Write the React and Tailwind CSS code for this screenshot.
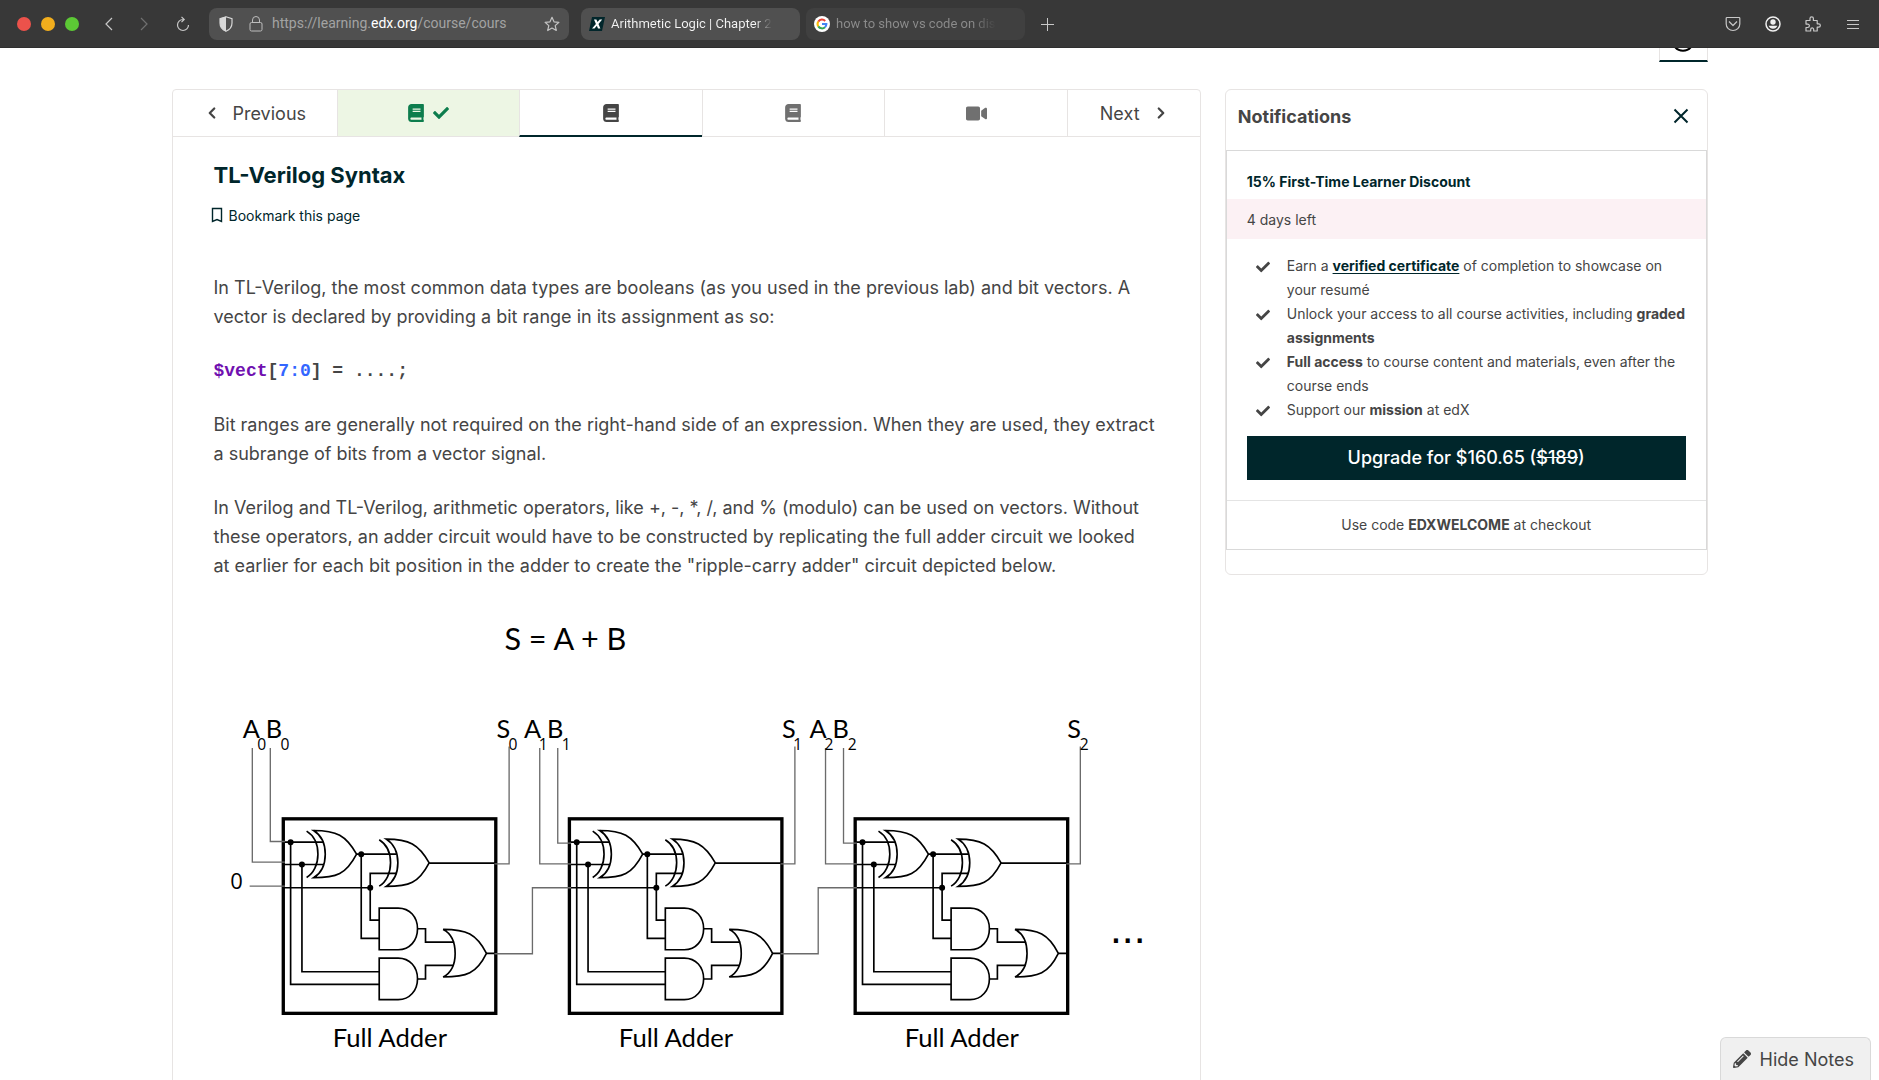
import { FaBook, FaCheck, FaVideo, FaPencilAlt } from "react-icons/fa";
import { ChevronLeft, ChevronRight } from "lucide-react";

const INK = "text-[#454545]";

function ShieldIcon() {
  return (
    <svg width="14" height="16" viewBox="0 0 14 16" className="shrink-0">
      <path d="M7 .8 13 2.6V7c0 3.8-2 6.6-6 8.3C3 13.600 1 10.800 1 7V2.600Z" fill="none" stroke="#d8d8d8" strokeWidth="1.200" />
      <path d="M7 .5v15C3 13.600 1 10.800 1 7V2.600Z" fill="#d8d8d8" />
    </svg>
  );
}

function LockIcon() {
  return (
    <svg width="14" height="16" viewBox="0 0 14 16" className="shrink-0" fill="none" stroke="#bdbdbd">
      <rect x="1" y="6.500" width="12" height="8.500" rx="1.500" />
      <path d="M3.500 6.500V4a3.500 3.500 0 0 1 7 0v2.500" />
    </svg>
  );
}

function StarIcon() {
  return (
    <svg width="16" height="16" viewBox="0 0 16 16" fill="none" stroke="#c4c4c4" strokeWidth="1.200" strokeLinejoin="round">
      <path d="m8 1.300 2 4.500 4.900.5-3.700 3.300 1.100 4.900L8 12l-4.300 2.500 1.100-4.900L1.100 6.300 6 5.800Z" />
    </svg>
  );
}

function EdxIcon() {
  return (
    <svg width="16" height="16" viewBox="0 0 16 16" className="shrink-0">
      <path d="M3 1h13l-3 14H0Z" fill="#02262b" />
      <path d="M5 3.500h2.400l1.100 2.600 2.200-2.600h2.500L9.500 7.900l1.900 4.600H9L7.900 9.700l-2.400 2.800H3L6.900 8Z" fill="#fff" />
    </svg>
  );
}

function GoogleIcon() {
  return (
    <svg width="16" height="16" viewBox="0 0 16 16" className="shrink-0" fill="none" strokeWidth="2">
      <circle cx="8" cy="8" r="8" fill="#fff" />
      <path d="M4.300 5.600A4.400 4.400 0 0 1 11.200 5" stroke="#ea4335" />
      <path d="M4.300 10.400a4.400 4.400 0 0 1 0-4.800" stroke="#fbbc05" />
      <path d="M11 11.200a4.400 4.400 0 0 1-6.700-.8" stroke="#34a853" />
      <path d="M8 8h4.400a4.400 4.400 0 0 1-1.400 3.200" stroke="#4285f4" />
    </svg>
  );
}

function BrowserBar() {
  return (
    <header className="flex h-12 shrink-0 items-center border-b border-[#2f2f2f] bg-[#383838] font-[Roboto,sans-serif]">
      <div className="flex w-[209px] shrink-0 items-center pl-[17px]">
        <div className="flex gap-[10px]">
          <button aria-label="Close window" className="size-[14px] rounded-full bg-[#ec524b]" />
          <button aria-label="Minimise window" className="size-[14px] rounded-full bg-[#f2ae1d]" />
          <button aria-label="Maximise window" className="size-[14px] rounded-full bg-[#5cc935]" />
        </div>
        <button aria-label="Back" className="ml-[22px]">
          <svg width="16" height="16" viewBox="0 0 16 16" fill="none" stroke="#c8c8c8" strokeWidth="1.200"><path d="M11 2 5 8l6 6" /></svg>
        </button>
        <button aria-label="Forward" className="ml-[19px]">
          <svg width="16" height="16" viewBox="0 0 16 16" fill="none" stroke="#707070" strokeWidth="1.200"><path d="m5 2 6 6-6 6" /></svg>
        </button>
        <button aria-label="Reload" className="ml-[23px]">
          <svg width="16" height="16" viewBox="0 0 16 16" fill="none" stroke="#c8c8c8" strokeWidth="1.200"><path d="M8.500 3.500H8A5.500 5.500 0 1 0 13.500 9M6.500 .8l2.700 2.700-2.700 2.700" /></svg>
        </button>
      </div>
      <div className="flex h-8 w-[360px] shrink-0 items-center rounded-lg bg-[#505050] pr-[9px] pl-[10px]">
        <ShieldIcon />
        <span className="ml-4"><LockIcon /></span>
        <span className="ml-[9px] flex-1 text-[14px] whitespace-nowrap text-[#a3a3a3]">
          https://learning.<span className="text-white">edx.org</span>/course/cours
        </span>
        <button aria-label="Bookmark"><StarIcon /></button>
      </div>
      <div className="ml-3 flex h-8 w-[219px] shrink-0 items-center gap-[6px] rounded-lg bg-[#505050] px-2 text-[13px] text-[#f4f4f4]">
        <EdxIcon />
        <span className="bg-linear-to-r from-[#f4f4f4] from-90% to-[#505050] bg-clip-text whitespace-nowrap text-transparent">Arithmetic Logic | Chapter 2</span>
      </div>
      <div className="ml-[6px] flex h-8 w-[219px] shrink-0 items-center gap-[6px] rounded-lg bg-[#404040] px-2 text-[13px] text-[#8c8c8c]">
        <GoogleIcon />
        <span className="bg-linear-to-r from-[#8c8c8c] from-85% to-[#404040] bg-clip-text whitespace-nowrap text-transparent">how to show vs code on dis</span>
      </div>
      <button aria-label="New tab" className="ml-[14px]">
        <svg width="16" height="16" viewBox="0 0 16 16" stroke="#c8c8c8" strokeWidth="1"><path d="M8.500 2v13M2 8.500h13" /></svg>
      </button>
      <div className="ml-auto flex items-center gap-6 pr-[18px]">
        <button aria-label="Pocket">
          <svg width="16" height="16" viewBox="0 0 16 16" fill="none" stroke="#c8c8c8" strokeWidth="1.200" strokeLinejoin="round">
            <path d="M2 1.500h12a.8.8 0 0 1 .8.8V8A6.800 6.500 0 0 1 1.200 8V2.300a.8.8 0 0 1 .8-.8Z" />
            <path d="m4 5.500 4 4 4-4" />
          </svg>
        </button>
        <button aria-label="Account">
          <svg width="16" height="16" viewBox="0 0 16 16" fill="none">
            <circle cx="8" cy="8" r="7" stroke="#f0f0f0" strokeWidth="1.500" />
            <circle cx="8" cy="6" r="2.700" fill="#f0f0f0" />
            <path d="M3.600 9.800h8.800A4.800 4.800 0 0 1 3.600 9.800Z" fill="#f0f0f0" />
          </svg>
        </button>
        <button aria-label="Extensions">
          <svg width="16" height="16" viewBox="0 0 16 16" fill="none" stroke="#c8c8c8" strokeWidth="1.200" strokeLinejoin="round">
            <path d="M1 4.500h4V2.500a1.700 1.700 0 0 1 3.400 0v2h3.800v3.300h1.500a1.600 1.600 0 0 1 0 3.300h-1.500V15H8.700v-1.600a1.500 1.500 0 0 0-3 0V15H1v-3.500h1.700a1.700 1.700 0 0 0 0-3.400H1Z" />
          </svg>
        </button>
        <button aria-label="Menu">
          <svg width="16" height="16" viewBox="0 0 16 16" stroke="#c8c8c8" strokeWidth="1"><path d="M2 4.500h12M2 8.500h12M2 12.500h12" /></svg>
        </button>
      </div>
    </header>
  );
}

function UnitNav() {
  return (
    <nav className={`flex h-[47px] text-[18px] ${INK}`}>
      <button className="flex w-[164px] items-center border-b border-[#e7e4e3] pl-[30px]">
        <ChevronLeft size={18} strokeWidth={3} />
        <span className="ml-3">Previous</span>
      </button>
      <button aria-label="Completed unit" className="flex flex-1 items-center justify-center gap-2 border-b border-l border-[#e7e4e3] bg-[#edf6e4] text-[#0d7d4d]">
        <FaBook size={18} />
        <FaCheck size={16} />
      </button>
      <button aria-label="Current unit" className="flex flex-1 items-center justify-center border-b-2 border-l border-b-[#00262b] border-l-[#e7e4e3]">
        <FaBook size={18} />
      </button>
      <button aria-label="Next reading" className="flex flex-1 items-center justify-center border-b border-l border-[#e7e4e3] text-[#707070]">
        <FaBook size={18} />
      </button>
      <button aria-label="Video" className="flex flex-1 items-center justify-center border-b border-l border-[#e7e4e3] text-[#707070]">
        <FaVideo size={21} />
      </button>
      <button className="flex w-[133px] items-center border-b border-l border-[#e7e4e3] pl-8">
        <span>Next</span>
        <ChevronRight size={18} strokeWidth={3} className="ml-3" />
      </button>
    </nav>
  );
}

function XorGate({ x, y }) {
  return (
    <g transform={`translate(${x} ${y})`}>
      <path d="M0 0C69 0 97 15 129 71 97 132 69 142 0 142 24 127 35 102 35 71S24 15 0 0Z" />
      <path d="M-21 2C0 15 13 40 13 71S0 129-21 141" />
    </g>
  );
}

function AndGate({ y }) {
  return <path d={`M478 ${y}h57c35 0 58 27 58 62s-23 63-58 63h-57Z`} />;
}

function Adder({ x }) {
  return (
    <g transform={`translate(${x} 0)`}>
      <g fill="none" stroke="#000" strokeWidth="5">
        <rect x="190" y="360" width="638" height="584" strokeWidth="10" />
        <path d="M190 430H311M190 497H311M190 567H451M212 430V857H478M246 497V819H478" />
        <XorGate x={281} y={395} />
        <path d="M410 466H530M424 466V719H478M530 524H451V664H478M628 493H828" />
        <XorGate x={499} y={421} />
        <AndGate y={628} />
        <AndGate y={778} />
        <path d="M593 690H617V730H703M593 841H617V800H702M800 764H828" />
        <path d="M670 692C740 692 770 705 800 764 770 825 740 835 670 835 692 823 706 800 706 764S692 703 670 692Z" />
      </g>
      <circle cx="212" cy="430" r="9" />
      <circle cx="246" cy="497" r="9" />
      <circle cx="424" cy="466" r="9" />
      <circle cx="451" cy="567" r="9" />
      <text x="510" y="1045" fontSize="77" textAnchor="middle">Full Adder</text>
    </g>
  );
}

function Label({ x, name, sub, subX }) {
  return (
    <>
      <text x={x} y="116" fontSize="76">{name}</text>
      <text x={subX} y="152" fontSize="47" fontFamily="Open Sans">{sub}</text>
    </>
  );
}

function AdderDiagram() {
  return (
    <svg viewBox="0 0 2838 1500" className="block w-full font-[Lato,sans-serif]" role="img" aria-label="Ripple-carry adder">
      <text x="1055" y="153" fontSize="92" textAnchor="middle">S = A + B</text>
      <g transform="translate(18 300)">
        <Adder x={0} />
        <Adder x={859} />
        <Adder x={1717} />
        <g fill="none" stroke="#6b6b6b" strokeWidth="4">
          <path d="M97 147V490H195M151 147V428H195M89 562H195" />
          <path d="M824 495H868V143M824 765H938V567H1054M960 147V495H1054M1014 147V433H1054" />
          <path d="M1683 495H1726V143M1683 765H1796V567H1912M1818 147V495H1912M1872 147V433H1912" />
          <path d="M2541 495H2583V143" />
        </g>
        <Label x={68} name="A" sub="0" subX={112} />
        <Label x={137} name="B" sub="0" subX={182} />
        <Label x={830} name="S" sub="0" subX={866} />
        <Label x={913} name="A" sub="1" subX={957} />
        <Label x={982} name="B" sub="1" subX={1026} />
        <Label x={1687} name="S" sub="1" subX={1721} />
        <Label x={1770} name="A" sub="2" subX={1815} />
        <Label x={1839} name="B" sub="2" subX={1885} />
        <Label x={2544} name="S" sub="2" subX={2581} />
        <text x="31" y="571" fontSize="66" fontFamily="Open Sans">0</text>
        <text x="2672" y="734" fontSize="128" fontFamily="Liberation Sans">...</text>
      </g>
    </svg>
  );
}

function Lesson() {
  return (
    <section className="min-w-0 flex-[1030] rounded-t border border-[#e7e4e3]">
      <UnitNav />
      <div className={`px-[41px] pt-6 text-[18px] leading-[29px] ${INK}`}>
        <h1 className="text-[22px] leading-7 font-bold text-[#00262b]">TL-Verilog Syntax</h1>
        <button className="mt-3 -ml-1 flex h-7 items-center gap-[5px] text-[14px] text-[#00262b]">
          <svg width="14" height="16" viewBox="0 0 14 16" fill="none" stroke="currentColor" strokeWidth="1.400"><path d="M2.500 1.500h9v13L7 12.500l-4.500 2Z" /></svg>
          Bookmark this page
        </button>
        <p className="mt-11">
          In TL-Verilog, the most common data types are booleans (as you used in the previous lab) and bit vectors. A vector is declared by providing a bit range in its assignment as so:
        </p>
        <p className="mt-[26px] font-['Liberation_Mono',monospace] font-bold">
          <span className="text-[#7010b0]">$vect</span>[<span className="text-[#3366ff]">7:0</span>] = ....;
        </p>
        <p className="mt-6">
          Bit ranges are generally not required on the right-hand side of an expression. When they are used, they extract a subrange of bits from a vector signal.
        </p>
        <p className="mt-[25px]">
          In Verilog and TL-Verilog, arithmetic operators, like +, -, *, /, and % (modulo) can be used on vectors. Without these operators, an adder circuit would have to be constructed by replicating the full adder circuit we looked at&nbsp;earlier for each bit position in the adder to create the "ripple-carry adder" circuit depicted below.
        </p>
        <div className="mt-[19px]"><AdderDiagram /></div>
      </div>
    </section>
  );
}

function Perk({ children }) {
  return (
    <li className="flex gap-[17px]">
      <FaCheck size={14} className="mt-[6px] shrink-0" />
      <span>{children}</span>
    </li>
  );
}

function Notifications() {
  return (
    <aside className={`min-w-0 flex-[482] self-start rounded-md border border-[#e7e4e3] pb-6 ${INK}`}>
      <div className="flex h-[60px] items-center justify-between pr-[18px] pb-2 pl-3">
        <h2 className="text-[18px] font-bold">Notifications</h2>
        <button aria-label="Close" className="text-[#00262b]">
          <svg width="16" height="16" viewBox="0 0 16 16" stroke="currentColor" strokeWidth="2"><path d="m1.500 1.500 13 13m0-13-13 13" /></svg>
        </button>
      </div>
      <div className="border border-[#d9d9d9] text-[14px] leading-6">
        <h3 className="px-5 pt-[19px] pb-[5px] font-bold text-[#00262b]">15% First-Time Learner Discount</h3>
        <p className="bg-[#fcf1f4] px-5 pt-[9px] pb-[7px]">4 days left</p>
        <div className="px-5 pt-[15px] pb-5">
          <ul className="pl-[9px]">
            <Perk>Earn a <a href="#certificate" className="font-bold text-[#00262b] underline decoration-1 underline-offset-2">verified certificate</a> of completion to showcase on your resumé</Perk>
            <Perk>Unlock your access to all course activities, including <b>graded assignments</b></Perk>
            <Perk><b>Full access</b> to course content and materials, even after the course ends</Perk>
            <Perk>Support our <b>mission</b> at edX</Perk>
          </ul>
          <button className="mt-[14px] h-11 w-full bg-[#00262b] text-[18px] font-medium text-white">
            Upgrade for $160.65 (<del>$189</del>)
          </button>
        </div>
        <p className="border-t border-[#e4e4e4] py-3 text-center">Use code <b>EDXWELCOME</b> at checkout</p>
      </div>
    </aside>
  );
}

export default function App() {
  return (
    <div className="relative flex h-screen flex-col overflow-hidden bg-white font-[Inter,sans-serif]">
      <BrowserBar />
      <main className="mx-auto flex min-h-0 w-full max-w-screen-2xl flex-1 flex-col overflow-hidden">
        <div className="flex h-[41px] shrink-0 items-start justify-end">
          <button aria-label="Show notifications" className="flex h-[14px] w-[49px] justify-center border-x border-b-2 border-x-[#e7e4e3] border-b-[#00262b]">
            <svg width="20" height="5" viewBox="0 0 20 5" fill="none" stroke="#000" strokeWidth="2"><path d="M2-1C6 4 14 4 18-1" /></svg>
          </button>
        </div>
        <div className="flex gap-6">
          <Lesson />
          <Notifications />
        </div>
      </main>
      <button className={`absolute right-2 bottom-0 flex h-[43px] items-center gap-[9px] rounded-t-md border border-b-0 border-[#d9d9d9] bg-[#f0f0f0] pr-4 pl-3 text-[18px] ${INK}`}>
        <FaPencilAlt size={18} />
        Hide Notes
      </button>
    </div>
  );
}
